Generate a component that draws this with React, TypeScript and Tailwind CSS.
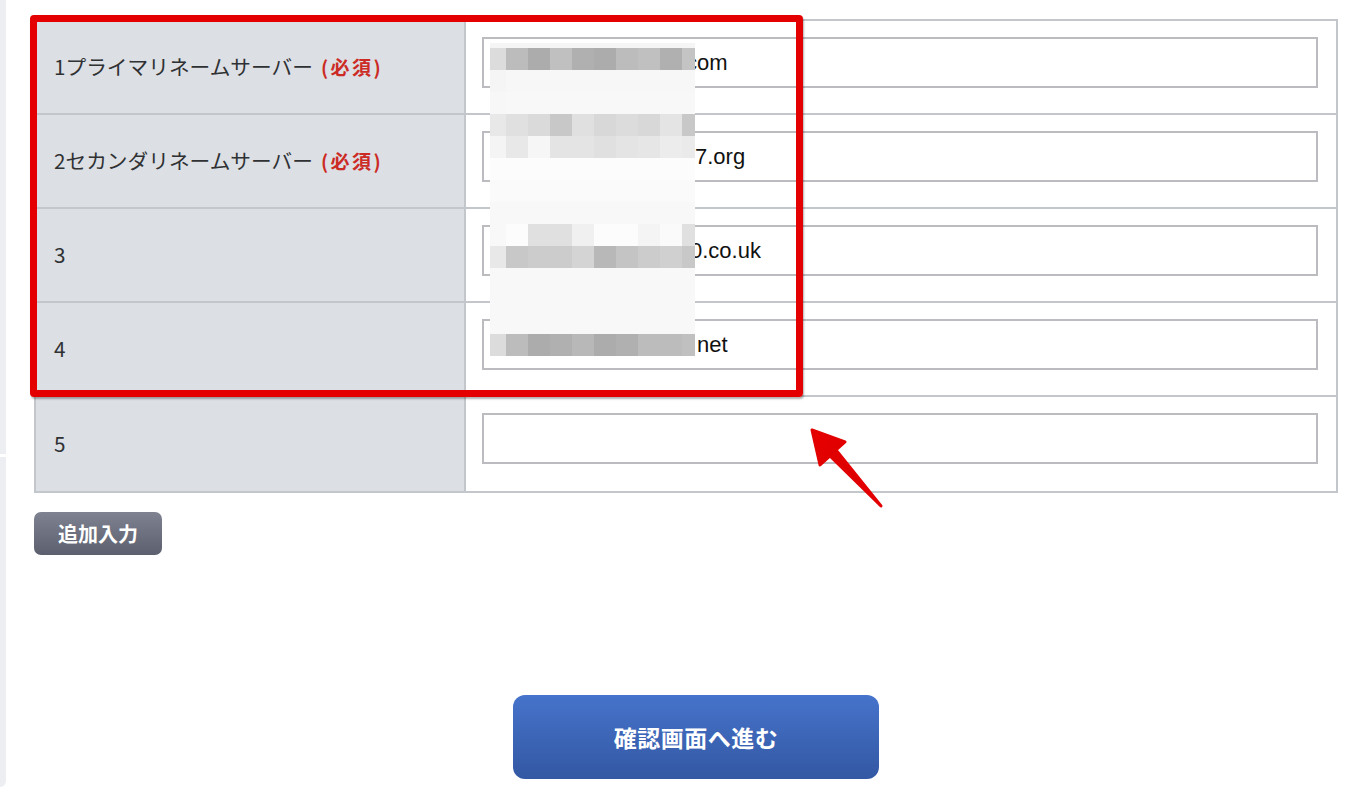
import React from "react";

type Row = {
   label: string;
   required: boolean;
   value: string;
   pad: string;
};

const rows: Row[] = [
   { label: "1プライマリネームサーバー", required: true, value: "com", pad: "pl-[202px]" },
   { label: "2セカンダリネームサーバー", required: true, value: "7.org", pad: "pl-[211px]" },
   { label: "3", required: false, value: "0.co.uk", pad: "pl-[206px]" },
   { label: "4", required: false, value: "net", pad: "pl-[213px]" },
   { label: "5", required: false, value: "", pad: "pl-[12px]" },
];

// gray levels of the pixelated block over the values (10 tiles per row)
const mosaic: number[][] = [
   [245, 245, 245, 245, 245, 245, 245, 245, 245, 245],
   [220, 188, 172, 192, 176, 172, 188, 192, 176, 196],
   [245, 247, 247, 247, 247, 247, 247, 247, 247, 247],
   [247, 248, 248, 248, 248, 248, 248, 248, 248, 248],
   [232, 224, 218, 200, 224, 216, 220, 216, 228, 200],
   [244, 232, 246, 228, 228, 224, 228, 230, 236, 234],
   [252, 252, 252, 252, 252, 252, 252, 252, 252, 252],
   [250, 250, 250, 250, 250, 250, 250, 250, 250, 250],
   [248, 248, 248, 248, 248, 248, 248, 248, 248, 248],
   [248, 252, 224, 224, 240, 252, 252, 244, 250, 224],
   [232, 200, 204, 204, 212, 184, 196, 204, 208, 200],
   [248, 248, 248, 248, 248, 248, 248, 248, 248, 248],
   [248, 248, 248, 248, 248, 248, 248, 248, 248, 248],
   [248, 248, 248, 248, 248, 248, 248, 248, 248, 248],
   [220, 188, 172, 176, 184, 172, 176, 188, 188, 192],
];

function Mosaic() {
   return (
      <div className="absolute left-[490px] top-[43px] grid grid-cols-[16px_repeat(8,22px)_13px] grid-rows-[5px_repeat(14,22px)]">
         {mosaic.map((line, r) =>
            line.map((g, c) => (
               <div key={`${r}-${c}`} style={{ backgroundColor: `rgb(${g},${g},${g})` }} />
            ))
         )}
      </div>
   );
}

function Arrow() {
   return (
      <svg className="absolute left-[800px] top-[420px]" width="95" height="100" viewBox="800 420 95 100">
         <defs>
            <linearGradient id="ar" x1="0" y1="0" x2="1" y2="1">
               <stop offset="0" stopColor="#e80000" />
               <stop offset="1" stopColor="#d00000" />
            </linearGradient>
         </defs>
         <polygon
            points="812,430 845,442 836,450 881,506 830,456 820,465"
            fill="url(#ar)"
            stroke="#e20000"
            strokeWidth="3"
            strokeLinejoin="round"
         />
      </svg>
   );
}

export default function App() {
   return (
      <div className="relative flex w-[1358px] h-[796px] overflow-hidden bg-white font-['Noto_Sans_CJK_JP',sans-serif]">
         {/* side strip */}
         <div className="flex flex-col gap-[3px] w-[6px]">
            <div className="h-[454px] bg-[#eceef2]" />
            <div className="h-[330px] bg-[#eceef2] rounded-br-[6px]" />
         </div>

         <div className="flex-1 pl-[28px] pt-[19px]">
            {/* name server table */}
            <div className="w-[1304px] border-2 border-[#c3c6ca]">
               {rows.map((row, i) => (
                  <div
                     key={i}
                     className={`grid grid-cols-[428px_2px_1fr] h-[94px] ${i < rows.length - 1 ? "border-b-2 border-[#c3c6ca]" : "h-[92px]"}`}
                  >
                     <div className="flex items-center pl-[18px] bg-[#dcdfe4] text-[20.7px] text-[#2f3133]">
                        <span>{row.label}</span>
                        {row.required && (
                           <span className="ml-[8px] text-[19px] font-bold tracking-[2.5px] text-[#cc2b25]">(必須)</span>
                        )}
                     </div>
                     <div className="bg-[#c3c6ca]" />
                     <div className="pl-[16px] pr-[18px] pt-[16px]">
                        <input
                           readOnly
                           value={row.value}
                           className={`w-full h-[51px] border-2 border-[#bbbbc0] bg-white outline-none text-[22px] text-[#111111] font-['Liberation_Sans',Arial,sans-serif] ${row.pad}`}
                        />
                     </div>
                  </div>
               ))}
            </div>

            <button className="block mt-[19px] w-[128px] h-[43px] rounded-[7px] bg-linear-to-b from-[#7e8291] to-[#5c606e] text-white text-[20px] font-bold">
               追加入力
            </button>

            <div className="flex mt-[140px] ml-[479px]">
               <button className="block w-[366px] h-[84px] rounded-[12px] bg-linear-to-b from-[#4673cb] to-[#3358a3] text-white text-[23px] font-bold tracking-[0.5px]">
                  確認画面へ進む
               </button>
            </div>
         </div>

         <Mosaic />

         {/* highlight frame */}
         <div className="absolute left-[30px] top-[15px] w-[773px] h-[382px] border-[7px] border-[#e40000] rounded-[4px] shadow-[1px_2px_2px_rgba(0,0,0,0.3)]" />

         <Arrow />
      </div>
   );
}
